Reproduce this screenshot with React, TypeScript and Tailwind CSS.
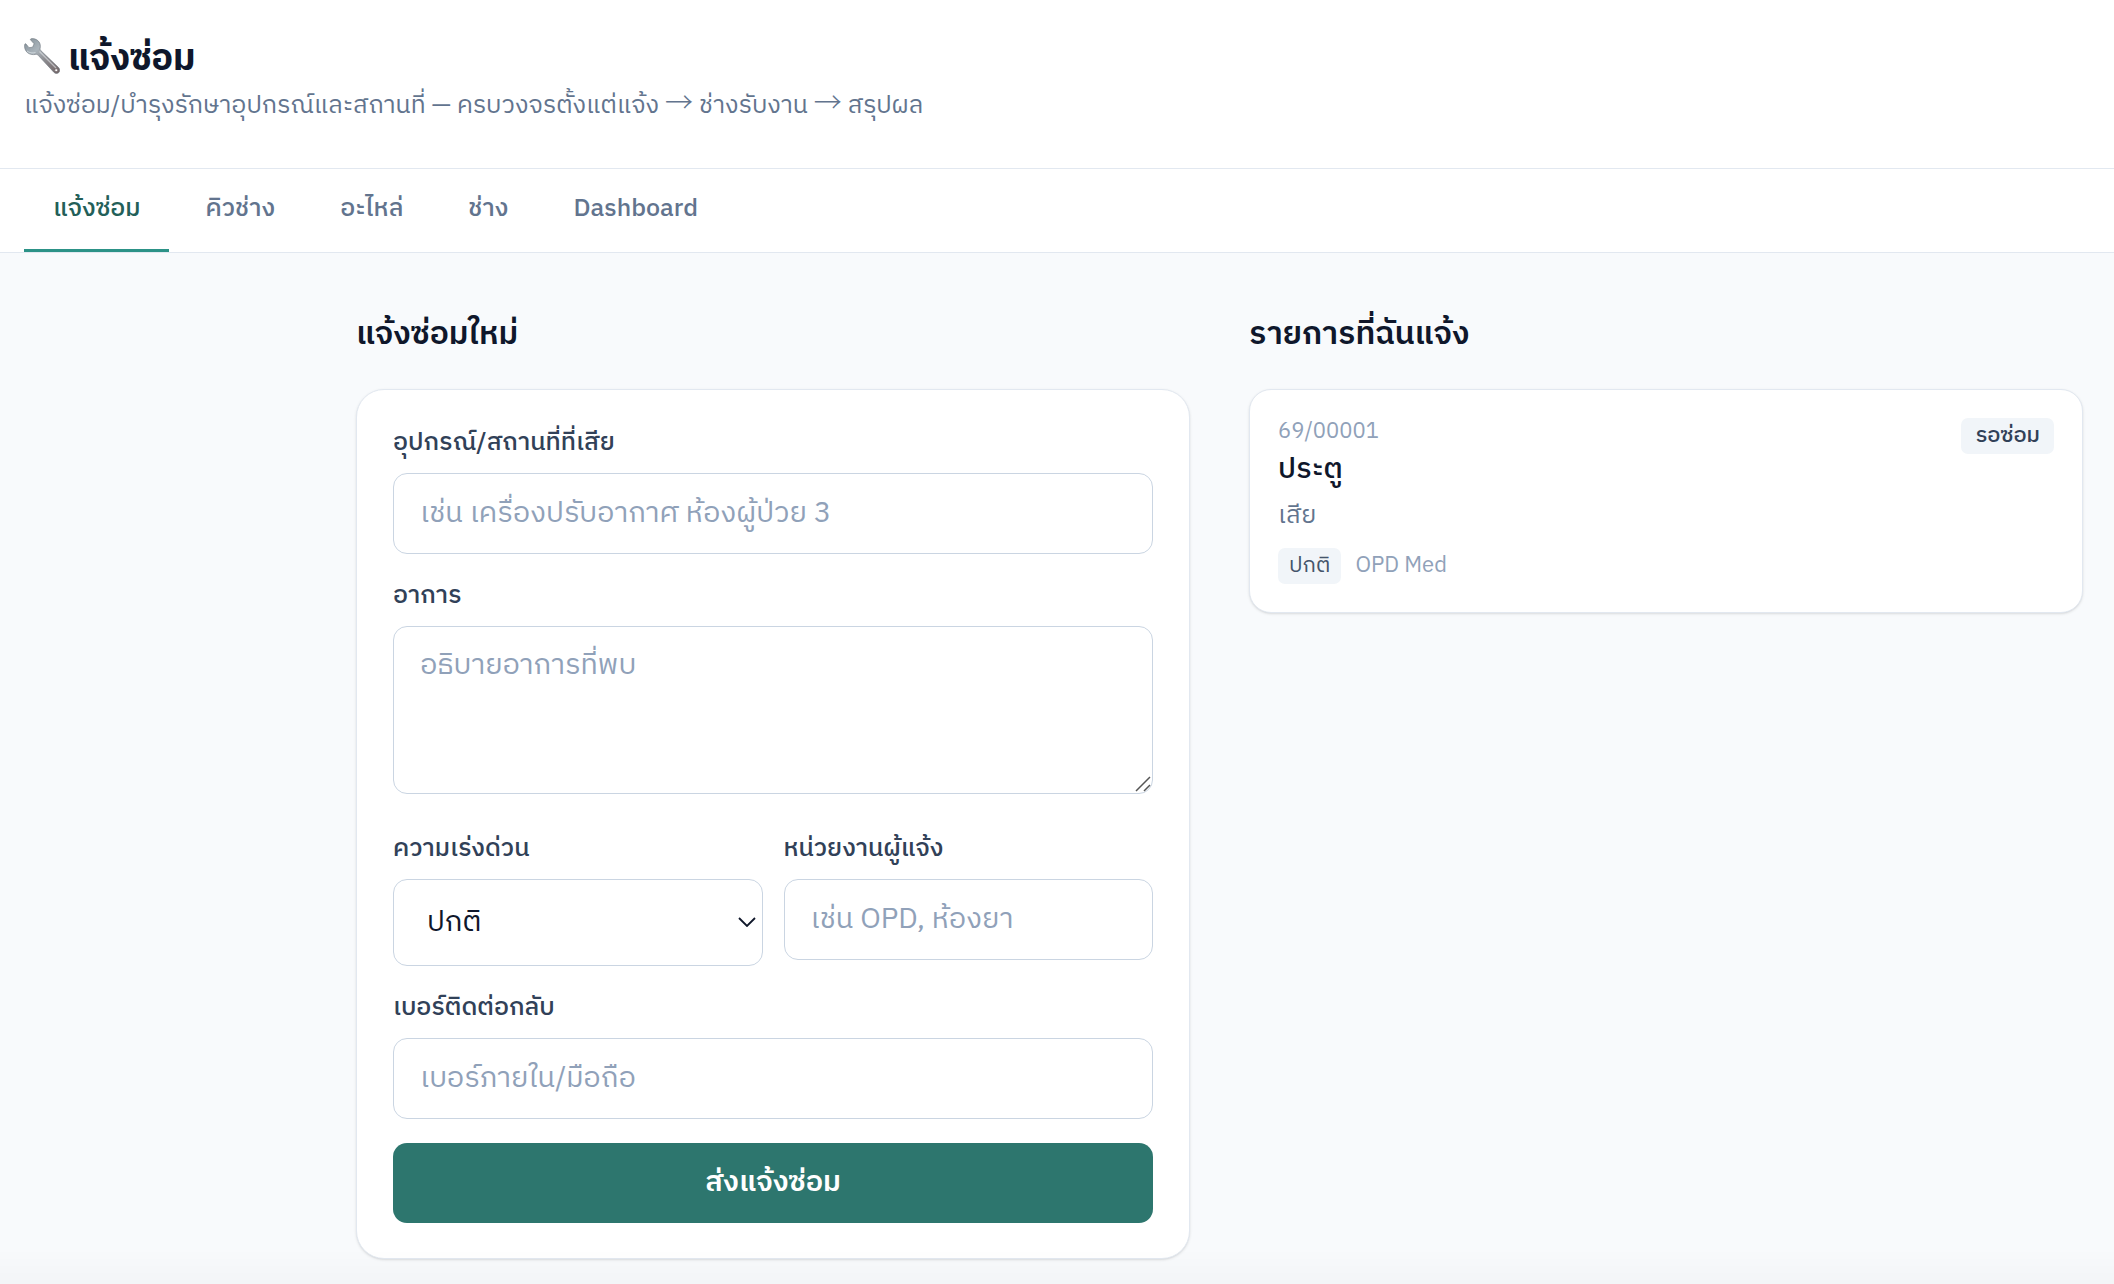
import React, { useState } from 'react';

const tabs = ['แจ้งซ่อม', 'คิวช่าง', 'อะไหล่', 'ช่าง', 'Dashboard'];

const tickets = [
  { id: '69/00001', title: 'ประตู', detail: 'เสีย', urgency: 'ปกติ', department: 'OPD Med', status: 'รอซ่อม' },
];

const labelClass = 'mb-3 block text-[25px] leading-9 font-medium text-slate-700';
const inputClass =
  'block w-full rounded-[14px] border border-slate-300 bg-white text-[29px] text-slate-900 placeholder:text-slate-400 outline-none focus:border-[#2c9287]';

const WrenchIcon: React.FC = () => (
  <svg viewBox="0 0 36 36" className="mt-0.5 size-9" aria-hidden="true">
    <defs>
      <linearGradient id="steel" x1="4" y1="2" x2="34" y2="34" gradientUnits="userSpaceOnUse">
        <stop offset="0" stopColor="#8b979f" />
        <stop offset="0.3" stopColor="#aab4bb" />
        <stop offset="0.6" stopColor="#8c8b8f" />
        <stop offset="1" stopColor="#75686a" />
      </linearGradient>
    </defs>
    <path
      d="M7 .8C9.500.200 12.700 1 14.800 3.600c1.600 2.100 1.800 4.600 1.300 6.800-.2 1 .2 1.700.9 2.400L34.600 29.600c1.400 1.600 1.500 3.700.2 5-1.400 1.300-3.600 1.200-5-.4L14.200 17.300c-.8-.8-1.500-1.100-2.600-.9-2.700.5-5.900.2-8.200-1.800C1 12.500 0 9 .8 6.200c.2-.6.8-.7 1.200-.2L5 9.700l3.600-.5 1.500-3.400L6.700 2C6.300 1.500 6.400 1 7 .8z"
      fill="url(#steel)"
      stroke="#6d767d"
      strokeWidth="0.6"
    />
    <path d="M15.500 13.500 32 30" stroke="#e3e7ea" strokeWidth="1.200" opacity="0.6" />
    <path d="M3 13c2.500 2 5.500 2.300 8.500 1.500" fill="none" stroke="#dde4e8" strokeWidth="1" opacity="0.7" />
    <circle cx="32.200" cy="32.200" r="1.400" fill="#fff" stroke="#6b6063" strokeWidth="0.6" />
  </svg>
);

const Arrow: React.FC = () => (
  <span className="font-['Noto_Sans_CJK_JP',sans-serif] text-[28px] leading-none font-light">→</span>
);

const App: React.FC = () => {
  const [activeTab, setActiveTab] = useState(tabs[0]);

  return (
    <div className="min-h-screen bg-slate-50 font-['IBM_Plex_Sans_Thai','Noto_Sans_Thai','Noto_Sans',sans-serif] text-slate-900">
      {/* Header */}
      <header className="border-b border-slate-200 bg-white px-6 pt-9 pb-[42px]">
        <h1 className="flex items-start gap-2 text-[36px] leading-12 font-bold">
          <WrenchIcon />
          แจ้งซ่อม
        </h1>
        <p className="mt-0.5 text-[25px] leading-10 text-slate-500">
          แจ้งซ่อม/บำรุงรักษาอุปกรณ์และสถานที่ — ครบวงจรตั้งแต่แจ้ง <Arrow /> ช่างรับงาน <Arrow /> สรุปผล
        </p>
      </header>

      {/* Tabs */}
      <nav className="flex gap-[7px] border-b border-slate-200 bg-white px-6">
        {tabs.map(tab => (
          <button
            key={tab}
            type="button"
            onClick={() => setActiveTab(tab)}
            className={`border-b-3 px-[29px] pt-5 pb-5 text-[25px] leading-10 font-medium ${
              tab === activeTab ? 'border-[#2c9287] text-[#235f59]' : 'border-transparent text-slate-500'
            }`}
          >
            {tab}
          </button>
        ))}
      </nav>

      <main className="ml-auto grid w-full max-w-[1788px] grid-cols-2 items-start gap-[59px] pt-[58px] pr-[31px] pb-[22px] pl-[30px]">
        {/* New request */}
        <section>
          <h2 className="mb-[30px] text-[32px] leading-12 font-semibold">แจ้งซ่อมใหม่</h2>
          <form
            className="flex flex-col gap-6 rounded-[28px] border border-slate-200 bg-white px-[36px] py-[35px] shadow-sm"
            onSubmit={e => e.preventDefault()}
          >
            <div>
              <label htmlFor="asset" className={labelClass}>อุปกรณ์/สถานที่ที่เสีย</label>
              <input id="asset" className={`${inputClass} h-[81px] px-[26px]`} placeholder="เช่น เครื่องปรับอากาศ ห้องผู้ป่วย 3" />
            </div>
            <div className="mb-[13px]">
              <label htmlFor="symptom" className={labelClass}>อาการ</label>
              <div className="relative">
                <textarea
                  id="symptom"
                  className={`${inputClass} h-[168px] resize-none px-[26px] py-[17px] leading-11`}
                  placeholder="อธิบายอาการที่พบ"
                />
                <svg viewBox="0 0 16 16" className="pointer-events-none absolute right-0.5 bottom-0.5 size-4" aria-hidden="true">
                  <path d="M1 15 15 1M9 15l6-6" stroke="#555" strokeWidth="1.500" />
                </svg>
              </div>
            </div>
            <div className="grid grid-cols-2 items-start gap-[21px]">
              <div>
                <label htmlFor="urgency" className={labelClass}>ความเร่งด่วน</label>
                <div className="relative">
                  <select id="urgency" className={`${inputClass} h-[87px] appearance-none px-[33px]`}>
                    <option>ปกติ</option>
                    <option>ด่วน</option>
                  </select>
                  <svg viewBox="0 0 18 10" className="pointer-events-none absolute top-[38px] right-[7px] h-[10px] w-[18px]" aria-hidden="true">
                    <path d="M1 1l8 8 8-8" fill="none" stroke="#0f172a" strokeWidth="1.800" />
                  </svg>
                </div>
              </div>
              <div>
                <label htmlFor="department" className={labelClass}>หน่วยงานผู้แจ้ง</label>
                <input id="department" className={`${inputClass} h-[81px] px-[26px]`} placeholder="เช่น OPD, ห้องยา" />
              </div>
            </div>
            <div>
              <label htmlFor="phone" className={labelClass}>เบอร์ติดต่อกลับ</label>
              <input id="phone" className={`${inputClass} h-[81px] px-[26px]`} placeholder="เบอร์ภายใน/มือถือ" />
            </div>
            <button type="submit" className="h-20 rounded-[14px] bg-[#2d766e] text-[29px] font-semibold text-white">
              ส่งแจ้งซ่อม
            </button>
          </form>
        </section>

        {/* My requests */}
        <section>
          <h2 className="mb-[30px] text-[32px] leading-12 font-semibold">รายการที่ฉันแจ้ง</h2>
          {tickets.map(ticket => (
            <article
              key={ticket.id}
              className="flex items-start justify-between rounded-[22px] border border-slate-200 bg-white p-[28px] shadow-sm"
            >
              <div>
                <div className="text-[22px] leading-7 text-slate-400">{ticket.id}</div>
                <h3 className="text-[29px] leading-12 font-medium">{ticket.title}</h3>
                <p className="mt-0.5 text-[25px] leading-10 text-slate-500">{ticket.detail}</p>
                <div className="mt-3 flex items-center gap-[14px] text-[22px] leading-9">
                  <span className="rounded-[7px] bg-slate-100 px-[11px] text-slate-600">{ticket.urgency}</span>
                  <span className="text-slate-400">{ticket.department}</span>
                </div>
              </div>
              <span className="rounded-[7px] bg-slate-100 px-[14px] text-[22px] leading-9 font-medium text-slate-700">
                {ticket.status}
              </span>
            </article>
          ))}
        </section>
      </main>

      {/* Soft fade along the bottom edge */}
      <div className="pointer-events-none fixed inset-x-0 bottom-0 h-9 bg-linear-to-t from-black/2 to-transparent" />
    </div>
  );
};

export default App;
